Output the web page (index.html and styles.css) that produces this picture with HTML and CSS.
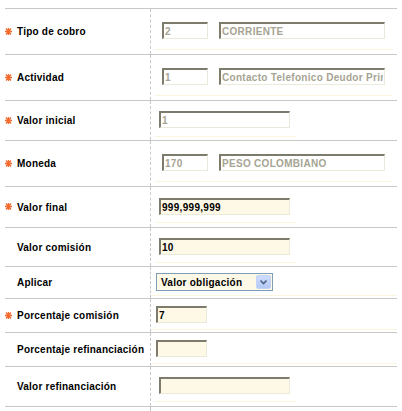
FILE: index.html
```html
<!DOCTYPE html>
<html>
<head>
<meta charset="utf-8">
<link rel="stylesheet" href="styles.css">
</head>
<body>
<div class="form">
  <div class="row v1">
    <div class="lbl"><span class="req"><svg width="7" height="7" viewBox="0 0 7 7"><path d="M0 3.5H7M1 0.5L6 6.5M6 0.5L1 6.5M3.5 0V7" /></svg></span>Tipo de cobro</div>
    <div class="cell"><div class="field f-wide"><input class="inp ro sm" value="2" readonly><input class="inp ro lg" value="CORRIENTE" readonly></div></div>
  </div>
  <div class="row v1">
    <div class="lbl"><span class="req"><svg width="7" height="7" viewBox="0 0 7 7"><path d="M0 3.5H7M1 0.5L6 6.5M6 0.5L1 6.5M3.5 0V7" /></svg></span>Actividad</div>
    <div class="cell"><div class="field f-wide"><input class="inp ro sm" value="1" readonly><input class="inp ro lg" value="Contacto Telefonico Deudor Principal" readonly></div></div>
  </div>
  <div class="row v3">
    <div class="lbl"><span class="req"><svg width="7" height="7" viewBox="0 0 7 7"><path d="M0 3.5H7M1 0.5L6 6.5M6 0.5L1 6.5M3.5 0V7" /></svg></span>Valor inicial</div>
    <div class="cell"><div class="field f-mid"><input class="inp ro md" value="1" readonly></div></div>
  </div>
  <div class="row v1">
    <div class="lbl"><span class="req"><svg width="7" height="7" viewBox="0 0 7 7"><path d="M0 3.5H7M1 0.5L6 6.5M6 0.5L1 6.5M3.5 0V7" /></svg></span>Moneda</div>
    <div class="cell"><div class="field f-wide"><input class="inp ro sm" value="170" readonly><input class="inp ro lg" value="PESO COLOMBIANO" readonly></div></div>
  </div>
  <div class="row v5">
    <div class="lbl"><span class="req"><svg width="7" height="7" viewBox="0 0 7 7"><path d="M0 3.5H7M1 0.5L6 6.5M6 0.5L1 6.5M3.5 0V7" /></svg></span>Valor final</div>
    <div class="cell"><div class="field f-mid"><input class="inp md" value="999,999,999"></div></div>
  </div>
  <div class="row v6">
    <div class="lbl">Valor comisión</div>
    <div class="cell"><div class="field f-mid"><input class="inp md" value="10"></div></div>
  </div>
  <div class="row v7">
    <div class="lbl">Aplicar</div>
    <div class="cell"><div class="field f-full">
      <div class="sel"><span class="sel-text">Valor obligación</span><span class="sel-btn"><svg width="9" height="6" viewBox="0 0 9 6"><path d="M1.5 1.5L4.5 4.5L7.5 1.5" /></svg></span></div>
    </div></div>
  </div>
  <div class="row v8">
    <div class="lbl"><span class="req"><svg width="7" height="7" viewBox="0 0 7 7"><path d="M0 3.5H7M1 0.5L6 6.5M6 0.5L1 6.5M3.5 0V7" /></svg></span>Porcentaje comisión</div>
    <div class="cell"><div class="field f-full"><input class="inp xs" value="7"></div></div>
  </div>
  <div class="row v8">
    <div class="lbl">Porcentaje refinanciación</div>
    <div class="cell"><div class="field f-full"><input class="inp xs" value=""></div></div>
  </div>
  <div class="row v10">
    <div class="lbl">Valor refinanciación</div>
    <div class="cell"><div class="field f-mid"><input class="inp md" value=""></div></div>
  </div>
  <div class="row tail">
    <div class="lbl"></div>
    <div class="cell"></div>
  </div>
</div>
</body>
</html>
```

FILE: styles.css
```css
* {
  box-sizing: border-box;
}

body {
  margin: 0;
  background: #ffffff;
  font-family: "Liberation Sans", Arial, sans-serif;
  font-size: 10px;
  font-weight: bold;
  color: #000000;
}

.form {
  margin: 8px 5px 0;
  width: 392px;
  border-top: 1px solid #c8c8c8;
}

.row {
  display: grid;
  grid-template-columns: 146px 1fr;
  border-bottom: 1px solid #c8c8c8;
}

.row.tail {
  border-bottom: none;
  height: 6px;
}

.lbl {
  display: flex;
  align-items: center;
  padding-left: 12px;
  border-right: 1px dashed #c8c8c8;
  letter-spacing: 0.22px;
  white-space: nowrap;
}

.req {
  display: flex;
  align-items: center;
  width: 12px;
  margin-left: -12px;
  margin-top: -1px;
}

.req svg {
  display: block;
}

.req path {
  stroke: #f26a2e;
  stroke-width: 1.3;
  fill: none;
}

.field {
  display: flex;
  align-items: flex-start;
  border-bottom: 1px solid #fbf4de;
}

.f-wide {
  margin: 0 4px;
  padding-left: 7px;
  gap: 11px;
}

.f-mid {
  margin-left: 4px;
  width: 141px;
  padding-left: 4px;
}

.f-full {
  padding-left: 5px;
}

.inp {
  display: block;
  margin: 0;
  height: 17px;
  padding: 0 1px;
  border-style: solid;
  border-width: 2px 1px 1px 2px;
  border-color: #7d7b6c #ebe9da #ebe9da #7d7b6c;
  background: #fef8e7;
  font-family: "Liberation Sans", Arial, sans-serif;
  font-size: 10px;
  font-weight: bold;
  letter-spacing: 0.3px;
  color: #000000;
  outline: none;
}

.inp.ro {
  background: #ffffff;
  color: #a6a492;
}

.sm { width: 46px; }
.lg { width: 166px; }
.md { width: 131px; }
.xs { width: 51px; }

.sel {
  width: 117px;
  height: 18px;
  border: 1px solid #7f9db9;
  background: #fef8e7;
  display: flex;
  align-items: center;
  justify-content: space-between;
  padding-left: 4px;
  padding-right: 1px;
}

.sel-text {
  letter-spacing: 0.25px;
}

.sel-btn {
  width: 15px;
  height: 14px;
  border-radius: 2px;
  border: 1px solid #c3d3f8;
  background: linear-gradient(#cfddfd, #b3c8f6);
  display: flex;
  align-items: center;
  justify-content: center;
}

.sel-btn path {
  stroke: #4d6185;
  stroke-width: 1.6;
  fill: none;
}

/* vertical rhythm per row */
.v1 .field { padding-top: 13px; padding-bottom: 10px; }
.v1 .cell { padding-bottom: 4px; }

.v3 .field { padding-top: 10px; padding-bottom: 8px; }
.v3 .cell { padding-bottom: 3px; }

.v5 .field { padding-top: 11px; padding-bottom: 7px; }
.v5 .cell { padding-bottom: 4px; }

.v6 .field { padding-top: 10px; padding-bottom: 7px; }
.v6 .cell { padding-bottom: 3px; }

.v7 .field { padding-top: 6px; padding-bottom: 4px; }
.v7 .cell { padding-bottom: 2px; }

.v8 .field { padding-top: 7px; padding-bottom: 6px; }
.v8 .cell { padding-bottom: 2px; }

.v10 .field { padding-top: 10px; padding-bottom: 7px; }
.v10 .cell { padding-bottom: 4px; }
```
